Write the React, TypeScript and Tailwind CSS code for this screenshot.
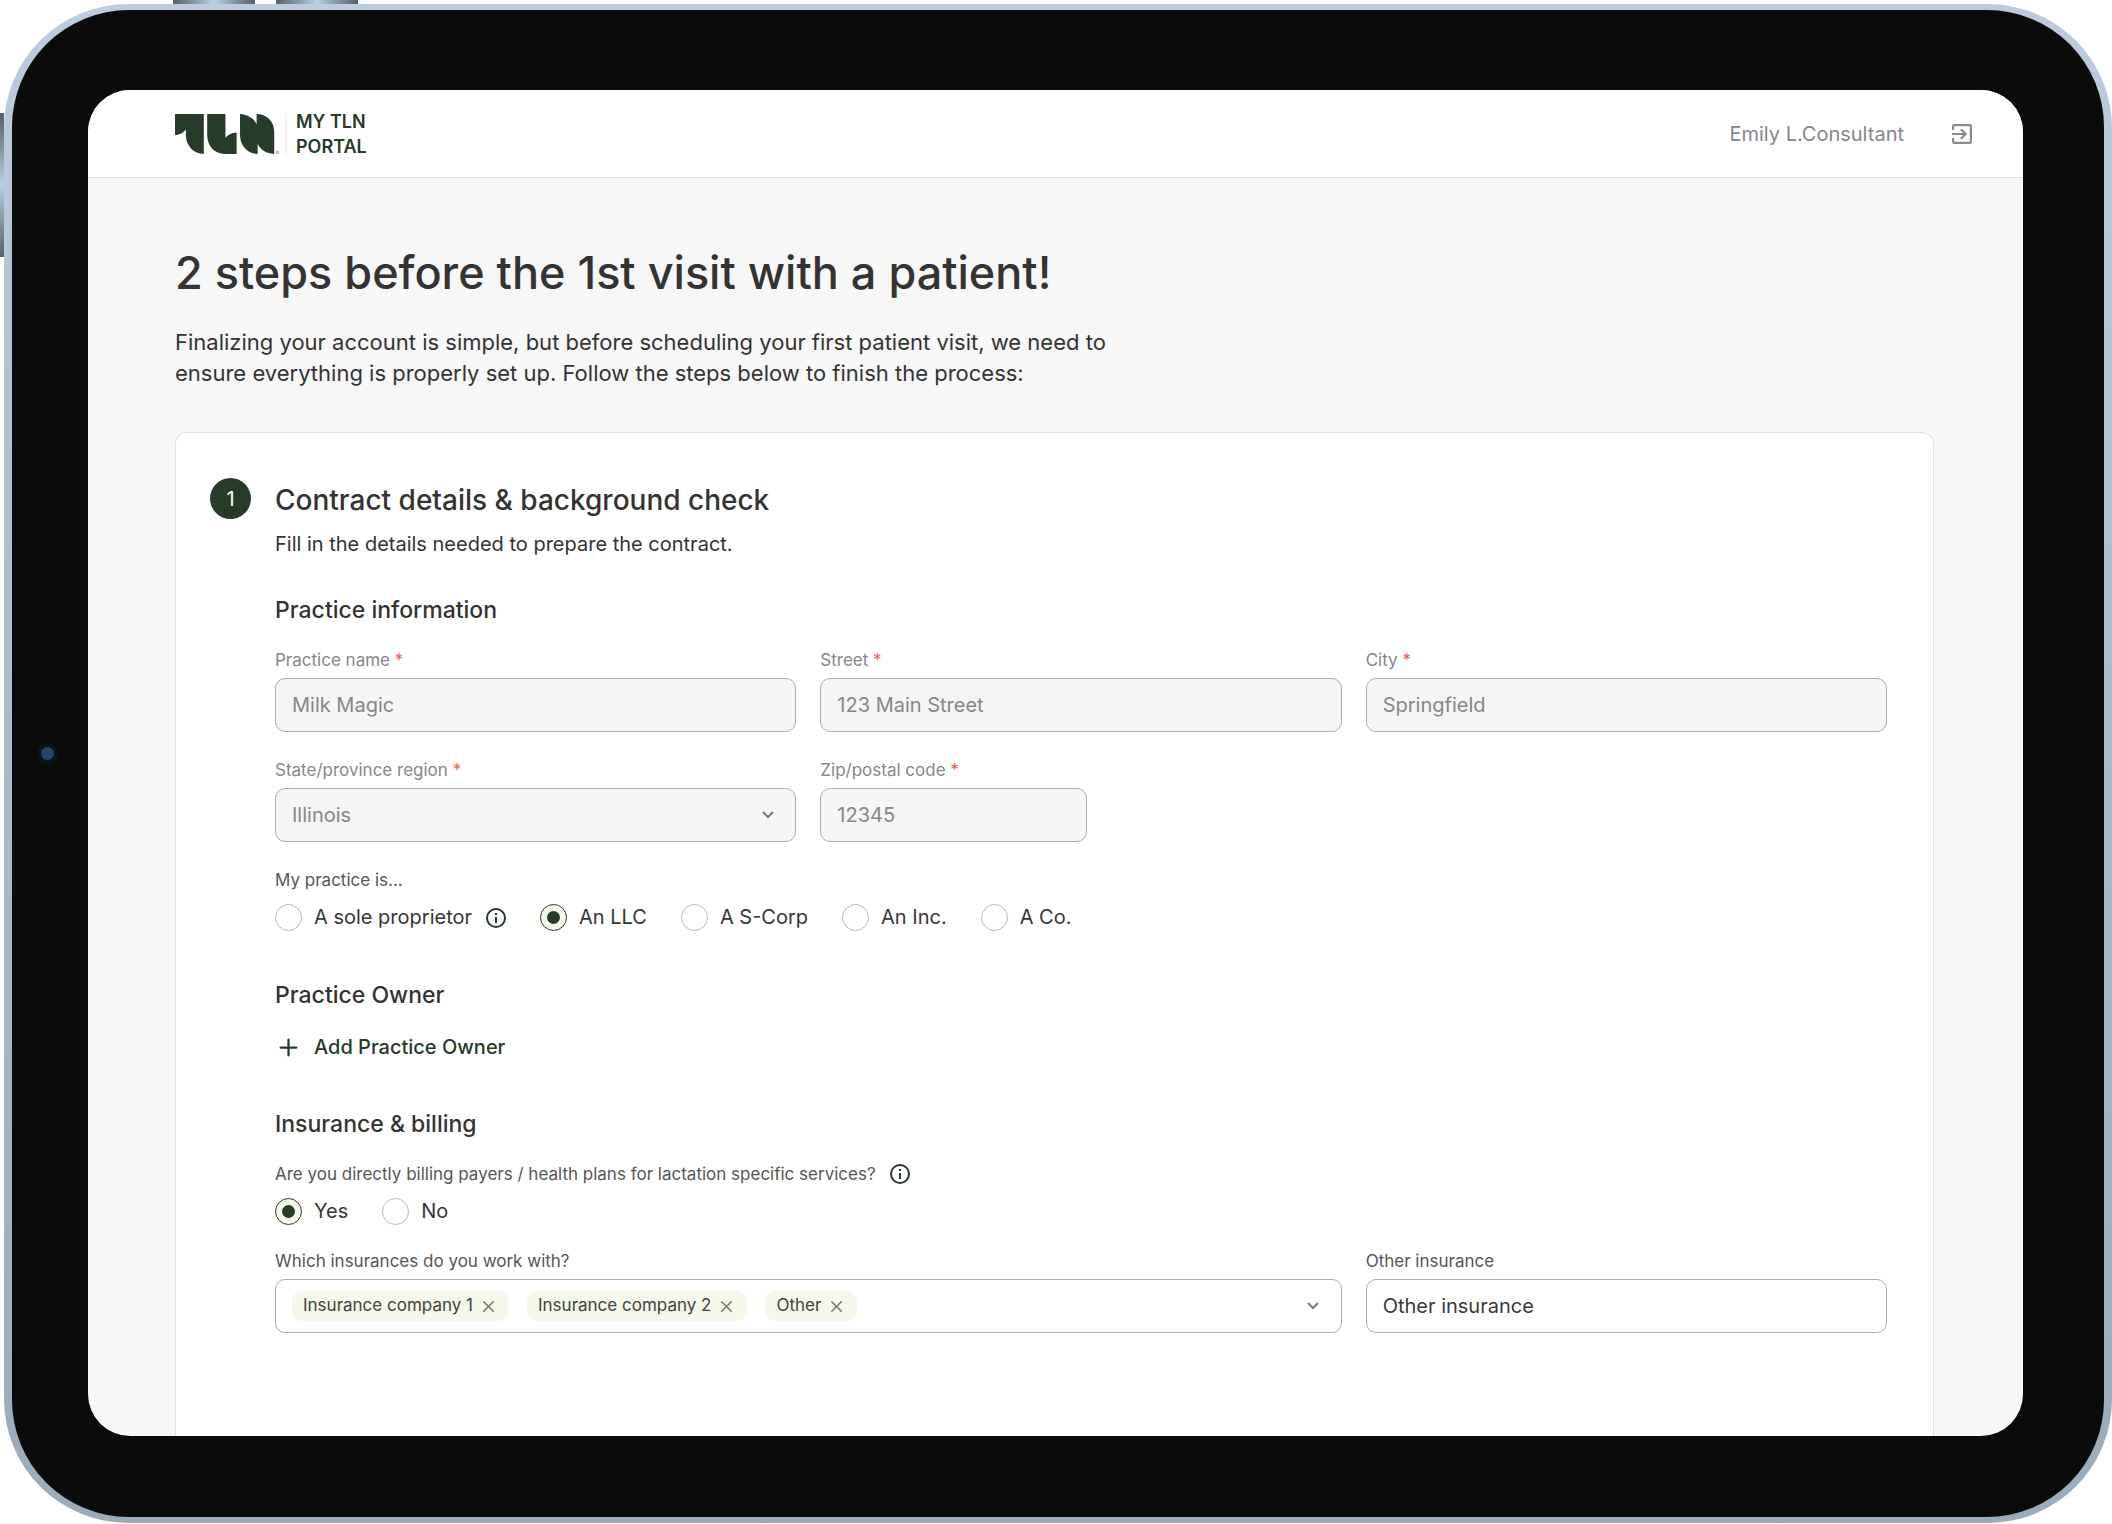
import { useState } from 'react';
import type { InputHTMLAttributes, ReactNode } from 'react';
import { Plus, X } from 'lucide-react';
import clsx from 'clsx';

const PRACTICE_TYPES = ['A sole proprietor', 'An LLC', 'A S-Corp', 'An Inc.', 'A Co.'];

function Logo() {
  return (
    <svg viewBox="0 0 310 118" className="h-10 w-[105px]" role="img" aria-label="TLN">
      <g fill="#263b29">
        <path d="M0 0H85V118C55 118 32 93 32 62V45C26 55 14 62 0 62Z" />
        <path d="M95 0H149V71C155 61 167 55 182 55V118H147C118 118 95 95 95 62Z" />
        <path d="M192 0C216 2 234 14 241 30V0C270 0 293 22 293 52V118C268 117 251 104 244 88V118C215 118 192 94 192 62Z" />
      </g>
      <circle cx="303" cy="113" r="4" fill="#d4d4d4" stroke="#a3a3a3" strokeWidth="2" />
    </svg>
  );
}

function LogoutIcon() {
  return (
    <svg viewBox="0 0 20 20" className="size-5" fill="none" stroke="currentColor" strokeWidth="2.2">
      <path d="M1.1 6V2.2C1.1 1.4 1.4 1.1 2.2 1.1H17.8C18.6 1.1 18.9 1.4 18.9 2.2V17.8C18.9 18.6 18.6 18.9 17.8 18.9H2.2C1.4 18.9 1.1 18.6 1.1 17.8V14" />
      <path d="M0 10H13.5M8.8 5.2L13.6 10L8.8 14.8" />
    </svg>
  );
}

function Chevron() {
  return (
    <svg viewBox="0 0 12 8" className="h-2 w-3" fill="none" stroke="#77797c" strokeWidth="2">
      <path d="M1 1L6 6L11 1" />
    </svg>
  );
}

function InfoButton({ label }: { label: string }) {
  return (
    <button type="button" aria-label={label} className="size-5 text-[#263b29]">
      <svg viewBox="0 0 20 20" className="size-5" fill="none" stroke="currentColor" strokeWidth="2">
        <circle cx="10" cy="10" r="9" />
        <path d="M10 9V15M10 5V7" />
      </svg>
    </button>
  );
}

interface FieldProps {
  id: string;
  label: string;
  required?: boolean;
  muted?: boolean;
  className?: string;
  children: ReactNode;
}

function Field({ id, label, required, muted, className, children }: FieldProps) {
  return (
    <div className={clsx('flex flex-col gap-1', className)}>
      <label
        htmlFor={id}
        className={clsx('text-[17px] leading-7', muted ? 'text-[#85878b]' : 'text-[#555658]')}
      >
        {label} {required && <span className="text-[#ee5a5a]">*</span>}
      </label>
      {children}
    </div>
  );
}

function TextInput(props: InputHTMLAttributes<HTMLInputElement>) {
  return (
    <input
      type="text"
      {...props}
      className="h-[54px] w-full rounded-[10px] border border-[#adadad] bg-white px-4 text-[20px] text-[#3a3a3a] disabled:bg-[#f5f5f5] disabled:text-[#85878b]"
    />
  );
}

interface RadioProps {
  name: string;
  label: string;
  checked: boolean;
  onSelect: () => void;
}

function Radio({ name, label, checked, onSelect }: RadioProps) {
  return (
    <label className="flex items-center gap-3 text-[20px] leading-[27px] text-[#363636]">
      <input
        type="radio"
        name={name}
        checked={checked}
        onChange={onSelect}
        className="grid size-[27px] appearance-none place-content-center rounded-full border border-[#b4b8c6] bg-white before:size-[13px] before:rounded-full checked:border-[#263b29] checked:bg-[#f3f8ea] checked:before:bg-[#263b29]"
      />
      {label}
    </label>
  );
}

function SectionTitle({ children }: { children: ReactNode }) {
  return <h3 className="text-[23px] leading-8 font-medium text-[#333333]">{children}</h3>;
}

function ContractForm() {
  const [practiceType, setPracticeType] = useState('An LLC');
  const [billing, setBilling] = useState('Yes');
  const [insurances, setInsurances] = useState(['Insurance company 1', 'Insurance company 2', 'Other']);

  return (
    <form className="flex flex-col">
      <SectionTitle>Practice information</SectionTitle>
      <div className="mt-5 grid grid-cols-3 gap-6">
        <Field id="practice-name" label="Practice name" required muted>
          <TextInput id="practice-name" defaultValue="Milk Magic" disabled />
        </Field>
        <Field id="street" label="Street" required muted>
          <TextInput id="street" defaultValue="123 Main Street" disabled />
        </Field>
        <Field id="city" label="City" required muted>
          <TextInput id="city" defaultValue="Springfield" disabled />
        </Field>
        <Field id="state" label="State/province region" required muted>
          <div className="relative">
            <select
              id="state"
              disabled
              className="h-[54px] w-full appearance-none rounded-[10px] border border-[#adadad] bg-[#f5f5f5] px-4 text-[20px] text-[#85878b] opacity-100"
            >
              <option>Illinois</option>
            </select>
            <span className="pointer-events-none absolute inset-y-0 right-[22px] flex items-center">
              <Chevron />
            </span>
          </div>
        </Field>
        <Field id="zip" label="Zip/postal code" required muted className="w-[267px]">
          <TextInput id="zip" defaultValue="12345" disabled />
        </Field>
      </div>

      <fieldset className="mt-6">
        <legend className="text-[17px] leading-7 text-[#555658]">My practice is...</legend>
        <div className="flex items-center gap-[34px] pt-[10px]">
          {PRACTICE_TYPES.map((type) => (
            <div key={type} className="flex items-center gap-[14px]">
              <Radio
                name="practice-type"
                label={type}
                checked={practiceType === type}
                onSelect={() => setPracticeType(type)}
              />
              {type === 'A sole proprietor' && <InfoButton label="About sole proprietors" />}
            </div>
          ))}
        </div>
      </fieldset>

      <div className="mt-12 flex flex-col items-start gap-5">
        <SectionTitle>Practice Owner</SectionTitle>
        <button
          type="button"
          className="flex items-center gap-3 text-[20px] leading-8 font-medium text-[#263b29]"
        >
          <Plus className="size-[27px]" strokeWidth={2} />
          Add Practice Owner
        </button>
      </div>

      <div className="mt-[45px] flex flex-col">
        <SectionTitle>Insurance &amp; billing</SectionTitle>
        <fieldset className="mt-5">
          <legend className="flex items-center gap-[14px] text-[17px] leading-7 text-[#555658]">
            Are you directly billing payers / health plans for lactation specific services?
            <InfoButton label="About direct billing" />
          </legend>
          <div className="flex items-center gap-[34px] pt-[10px]">
            {['Yes', 'No'].map((answer) => (
              <Radio
                key={answer}
                name="billing"
                label={answer}
                checked={billing === answer}
                onSelect={() => setBilling(answer)}
              />
            ))}
          </div>
        </fieldset>
      </div>

      <div className="mt-[22px] grid grid-cols-3 gap-6">
        <Field id="insurances" label="Which insurances do you work with?" className="col-span-2">
          <div className="flex h-[54px] items-center gap-[18px] rounded-[10px] border border-[#adadad] pr-[22px] pl-4">
            {insurances.map((name) => (
              <span
                key={name}
                className="flex h-[30px] items-center gap-[6px] rounded-[10px] bg-[#f3f8ea] px-[11px] text-[17px] text-[#424242]"
              >
                {name}
                <button
                  type="button"
                  aria-label={`Remove ${name}`}
                  onClick={() => setInsurances(insurances.filter((item) => item !== name))}
                  className="text-[#77797c]"
                >
                  <X className="size-[19px]" strokeWidth={2} />
                </button>
              </span>
            ))}
            <button id="insurances" type="button" aria-label="Choose insurances" className="ml-auto">
              <Chevron />
            </button>
          </div>
        </Field>
        <Field id="other-insurance" label="Other insurance">
          <TextInput id="other-insurance" defaultValue="Other insurance" />
        </Field>
      </div>
    </form>
  );
}

function Portal() {
  return (
    <div className="flex flex-1 flex-col overflow-hidden rounded-[42px] bg-[#f7f7f7]">
      <header className="flex h-[88px] items-center border-b border-[#dedede] bg-white pt-px pr-[51px] pl-[87px]">
        <a href="#" className="flex items-center gap-[5px] text-[#263b29]">
          <Logo />
          <span className="h-10 w-[2px] bg-[#f3f3f3]" />
          <span className="pl-1 text-[18px] leading-[25px] font-semibold">
            MY TLN
            <br />
            PORTAL
          </span>
        </a>
        <span className="ml-auto text-[20px] text-[#85878b]">Emily L.Consultant</span>
        <button type="button" aria-label="Log out" className="ml-12 text-[#8a8a8a]">
          <LogoutIcon />
        </button>
      </header>

      <main className="flex flex-1 flex-col pr-[89px] pl-[87px]">
        <h1 className="mt-[65px] text-[45px] leading-[60px] font-medium text-[#333333]">
          2 steps before the 1st visit with a patient!
        </h1>
        <p className="mt-6 max-w-[980px] text-[22px] leading-[31px] text-[#333333]">
          Finalizing your account is simple, but before scheduling your first patient visit, we need to
          ensure everything is properly set up. Follow the steps below to finish the process:
        </p>

        <section className="mt-[43px] flex flex-1 gap-6 rounded-t-xl border border-b-0 border-[#e0e0e0] bg-white pt-[45px] pr-[46px] pb-[60px] pl-[34px]">
          <span className="flex size-[41px] shrink-0 items-center justify-center rounded-full bg-[#263b29] text-[20px] text-white">
            1
          </span>
          <div className="flex-1">
            <h2 className="text-[28px] leading-[44px] font-medium text-[#333333]">
              Contract details &amp; background check
            </h2>
            <p className="mb-[27px] text-[20px] leading-[45px] text-[#333333]">
              Fill in the details needed to prepare the contract.
            </p>
            <ContractForm />
          </div>
        </section>
      </main>
    </div>
  );
}

export default function App() {
  return (
    <div className="relative flex min-h-screen flex-col bg-white pt-1 pb-px pl-1 font-['Inter',sans-serif]">
      <div className="absolute top-0 left-[173px] flex gap-[21px]">
        <span className="h-1 w-[82px] bg-linear-to-r from-[#55616a] via-[#b7d0e4] to-[#55616a]" />
        <span className="h-1 w-[82px] bg-linear-to-r from-[#55616a] via-[#b7d0e4] to-[#55616a]" />
      </div>
      <span className="absolute top-[113px] left-0 h-36 w-1 bg-linear-to-b from-[#55616a] via-[#b7d0e4] to-[#55616a]" />

      <div className="flex flex-1 flex-col rounded-[124px] bg-linear-to-b from-[#bccbdd] to-[#9cabb9] px-2 py-[6px]">
        <div className="relative flex flex-1 flex-col rounded-[117px] bg-[#0b0b0b] pt-20 pr-[81px] pb-[81px] pl-[76px]">
          <span className="absolute top-[733px] left-[25px] size-[21px] rounded-full border-4 border-[#0a1519] bg-[#24436f]" />
          <Portal />
        </div>
      </div>
    </div>
  );
}
